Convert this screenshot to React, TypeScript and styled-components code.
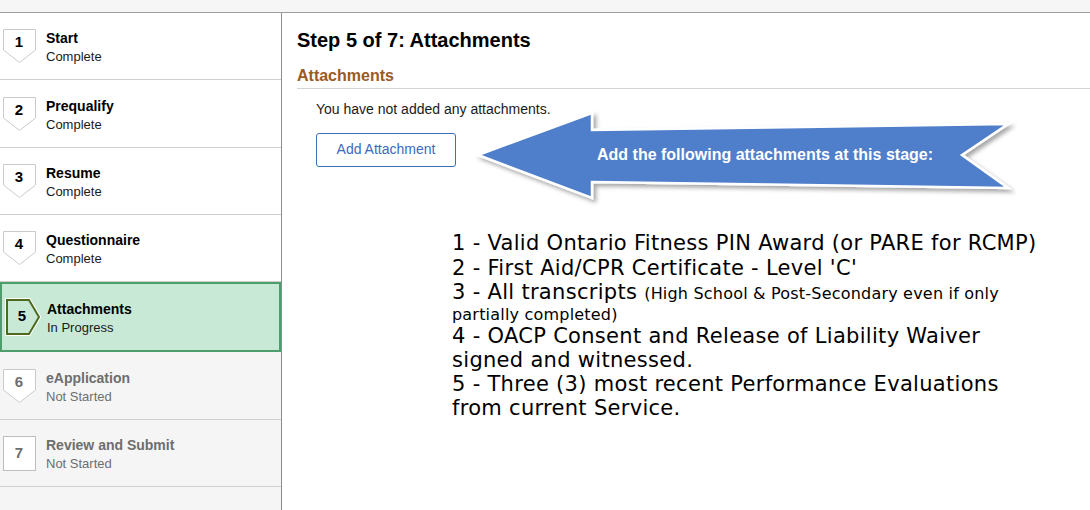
import React from "react";
import styled, { createGlobalStyle } from "styled-components";

const GlobalStyle = createGlobalStyle`
  html, body { margin: 0; padding: 0; background: #ffffff; }
  body { font-family: "Liberation Sans", Arial, sans-serif; color: #000; }
  * { box-sizing: border-box; }
`;

const Page = styled.div`
  width: 1090px;
  height: 510px;
  display: flex;
  flex-direction: column;
  overflow: hidden;
`;

const TopBar = styled.div`
  height: 13px;
  flex: none;
  background: #f6f6f6;
  border-bottom: 1px solid #9c9c9c;
`;

const Body = styled.div`
  flex: 1;
  display: flex;
  min-height: 0;
`;

const Sidebar = styled.nav`
  width: 282px;
  flex: none;
  background: #f5f5f5;
  border-right: 1px solid #8c8c8c;
  display: flex;
  flex-direction: column;
`;

type StepState = "done" | "active" | "todo";

const StepRow = styled.div<{ $state: StepState; $h: number }>`
  height: ${(p) => p.$h}px;
  flex: none;
  display: flex;
  align-items: center;
  gap: ${(p) => (p.$state === "active" ? "6px" : "10px")};
  padding-left: 3px;
  background: ${(p) =>
    p.$state === "done" ? "#ffffff" : p.$state === "active" ? "#c8e9d5" : "#f5f5f5"};
  border-bottom: 1px solid #cfcfcf;
  ${(p) =>
    p.$state === "active" &&
    `
    border: 2px solid #4d9e6c;
  `}
`;

const BadgeBox = styled.div<{ $w: number; $h: number }>`
  position: relative;
  width: ${(p) => p.$w}px;
  height: ${(p) => p.$h}px;
  flex: none;
`;

const BadgeSvg = styled.svg`
  position: absolute;
  inset: 0;
`;

const BadgeNum = styled.span<{ $top: number; $left: number; $color: string }>`
  position: absolute;
  top: ${(p) => p.$top}px;
  left: ${(p) => p.$left}px;
  width: 32px;
  text-align: center;
  font-size: 15px;
  font-weight: bold;
  line-height: 16px;
  color: ${(p) => p.$color};
`;

const StepText = styled.div`
  display: flex;
  flex-direction: column;
  gap: 3px;
  margin-top: 3px;
`;

const StepTitle = styled.div<{ $muted: boolean }>`
  font-size: 14px;
  font-weight: bold;
  line-height: 16px;
  color: ${(p) => (p.$muted ? "#6e6e6e" : "#000")};
`;

const StepStatus = styled.div<{ $muted: boolean }>`
  font-size: 13px;
  line-height: 16px;
  color: ${(p) => (p.$muted ? "#6e6e6e" : "#1a1a1a")};
`;

const SidebarFill = styled.div`
  flex: 1;
`;

const Main = styled.main`
  flex: 1;
  position: relative;
  padding: 15px 0 0 15px;
  background: #fff;
`;

const Title = styled.h1`
  margin: 0;
  font-size: 20px;
  line-height: 24px;
  font-weight: bold;
  color: #000;
`;

const SectionHead = styled.h2`
  margin: 15px 0 0 0;
  font-size: 16px;
  line-height: 18px;
  font-weight: bold;
  color: #9b5a1f;
  padding-bottom: 3px;
  border-bottom: 1px solid #d4d4d4;
`;

const SectionBody = styled.div`
  padding-left: 19px;
  display: flex;
  flex-direction: column;
  align-items: flex-start;
`;

const Note = styled.p`
  margin: 12px 0 0 0;
  font-size: 14px;
  line-height: 16px;
  color: #1a1a1a;
`;

const Button = styled.button`
  margin-top: 16px;
  width: 140px;
  height: 34px;
  border: 1px solid #3d6fb9;
  border-radius: 3px;
  background: #fff;
  color: #3a6bc0;
  font-family: "Liberation Sans", Arial, sans-serif;
  font-size: 14px;
  padding: 0 0 3px 0;
`;

const List = styled.div`
  margin: 64px 0 0 155px;
  font-family: "DejaVu Sans", Verdana, Tahoma, sans-serif;
  font-size: 21px;
  letter-spacing: 0.3px;
  line-height: 24.5px;
  color: #000;
`;

const Item = styled.div<{ $lh?: number; $mt?: number }>`
  line-height: ${(p) => (p.$lh ? `${p.$lh}px` : "inherit")};
  margin-top: ${(p) => p.$mt ?? 0}px;
`;

const Small = styled.span`
  font-size: 16px;
  letter-spacing: 0.2px;
  line-height: 16px;
`;

const Callout = styled.div`
  position: absolute;
  left: 188px;
  top: 92px;
  width: 550px;
  height: 100px;
  display: flex;
  align-items: center;
  padding-left: 127px;
`;

const CalloutSvg = styled.svg`
  position: absolute;
  inset: 0;
  overflow: visible;
`;

const CalloutLabel = styled.span`
  position: relative;
  color: #fff;
  font-size: 16px;
  font-weight: bold;
`;

type Step = { n: number; title: string; status: string; state: StepState; h: number };

const steps: Step[] = [
  { n: 1, title: "Start", status: "Complete", state: "done", h: 67 },
  { n: 2, title: "Prequalify", status: "Complete", state: "done", h: 68 },
  { n: 3, title: "Resume", status: "Complete", state: "done", h: 67 },
  { n: 4, title: "Questionnaire", status: "Complete", state: "done", h: 67 },
  { n: 5, title: "Attachments", status: "In Progress", state: "active", h: 70 },
  { n: 6, title: "eApplication", status: "Not Started", state: "todo", h: 68 },
  { n: 7, title: "Review and Submit", status: "Not Started", state: "todo", h: 67 },
];

function Badge({ n, state, last }: { n: number; state: StepState; last: boolean }) {
  if (state === "active") {
    return (
      <BadgeBox $w={36} $h={38}>
        <BadgeSvg width="36" height="38" viewBox="0 0 36 38">
          <polygon
            points="2,2 24,2 34,19 24,36 2,36"
            fill="#fff"
            stroke="#fff"
            strokeWidth="4"
            strokeLinejoin="miter"
          />
          <polygon
            points="2,2 24,2 34,19 24,36 2,36"
            fill="#c8e9d5"
            stroke="#4e6a1c"
            strokeWidth="2"
          />
        </BadgeSvg>
        <BadgeNum $top={10} $left={1} $color="#000">
          {n}
        </BadgeNum>
      </BadgeBox>
    );
  }
  const color = state === "todo" ? "#6e6e6e" : "#000";
  if (last) {
    return (
      <BadgeBox $w={33} $h={35}>
        <BadgeSvg width="33" height="35" viewBox="0 0 33 35">
          <rect x="0.5" y="0.5" width="32" height="34" fill="#fff" stroke="#bdbdbd" />
        </BadgeSvg>
        <BadgeNum $top={9} $left={0} $color={color}>
          {n}
        </BadgeNum>
      </BadgeBox>
    );
  }
  return (
    <BadgeBox $w={33} $h={34}>
      <BadgeSvg width="33" height="34" viewBox="0 0 33 34">
        <polygon
          points="0.5,0.5 32.5,0.5 32.5,21 16.5,33.5 0.5,21"
          fill="#fff"
          stroke="#cacaca"
        />
      </BadgeSvg>
      <BadgeNum $top={5} $left={0} $color={color}>
        {n}
      </BadgeNum>
    </BadgeBox>
  );
}

export default function App() {
  return (
    <Page>
      <GlobalStyle />
      <TopBar />
      <Body>
        <Sidebar>
          {steps.map((s, i) => (
            <StepRow key={s.n} $state={s.state} $h={s.h}>
              <Badge n={s.n} state={s.state} last={i === steps.length - 1} />
              <StepText>
                <StepTitle $muted={s.state === "todo"}>{s.title}</StepTitle>
                <StepStatus $muted={s.state === "todo"}>{s.status}</StepStatus>
              </StepText>
            </StepRow>
          ))}
          <SidebarFill />
        </Sidebar>
        <Main>
          <Title>Step 5 of 7: Attachments</Title>
          <SectionHead>Attachments</SectionHead>
          <SectionBody>
            <Note>You have not added any attachments.</Note>
            <Button type="button">Add Attachment</Button>
          </SectionBody>
          <List>
            <Item>1 - Valid Ontario Fitness PIN Award (or PARE for RCMP)</Item>
            <Item>2 - First Aid/CPR Certificate - Level 'C'</Item>
            <Item $lh={21} $mt={2}>
              3 - All transcripts <Small>(High School &amp; Post-Secondary even if only</Small>
              <br />
              <Small>partially completed)</Small>
            </Item>
            <Item $lh={24}>
              4 - OACP Consent and Release of Liability Waiver
              <br />
              signed and witnessed.
            </Item>
            <Item $lh={24}>
              5 - Three (3) most recent Performance Evaluations
              <br />
              from current Service.
            </Item>
          </List>
          <Callout>
            <CalloutSvg width="550" height="100" viewBox="0 0 550 100">
              <defs>
                <filter id="arrowShadow" x="-5%" y="-20%" width="115%" height="150%">
                  <feDropShadow dx="3" dy="3" stdDeviation="2" floodColor="#000" floodOpacity="0.35" />
                </filter>
              </defs>
              <polygon
                points="8,50 122,8 122,25 538,19 492,50 538,83 122,77 122,93"
                fill="#4f7ecb"
                stroke="#ffffff"
                strokeWidth="2.5"
                strokeLinejoin="miter"
                filter="url(#arrowShadow)"
              />
            </CalloutSvg>
            <CalloutLabel>Add the following attachments at this stage:</CalloutLabel>
          </Callout>
        </Main>
      </Body>
    </Page>
  );
}
